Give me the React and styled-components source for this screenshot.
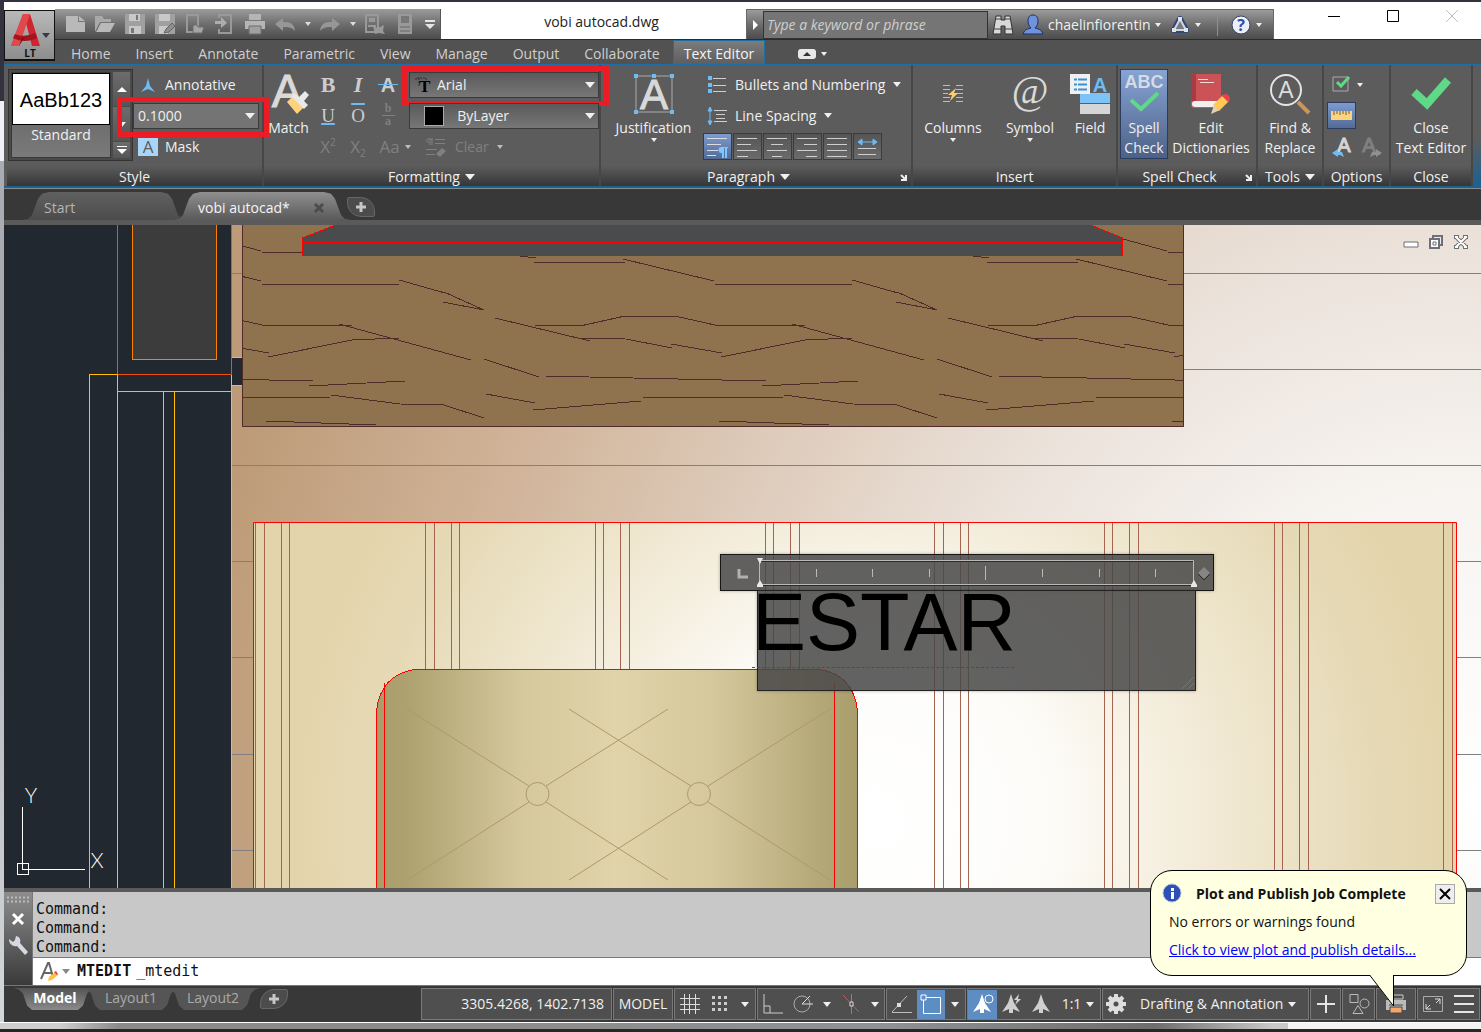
import React from "react";
import styled, { createGlobalStyle, css } from "styled-components";

const GlobalStyle = createGlobalStyle`
  * { box-sizing: border-box; }
  body {
    margin: 0;
    font-family: "Open Sans", "Noto Sans", sans-serif;
    font-size: 14px;
    line-height: 20px;
    color: #f0f0f0;
    background: #33333f;
  }
  button, input, select, textarea { font: inherit; color: inherit; }
  button { padding: 0; border: 0; background: none; white-space: nowrap; }
  svg { display: block; flex: none; overflow: visible; }
`;

const metal = "linear-gradient(#9b9b9b, #6e6e6e 50%, #4c4c4c)";
const BLUE = "#6cbcf5";
const GREEN = "#5fd887";

const Desktop = styled.div`
  display: flex;
  flex-direction: column;
  min-height: 100vh;
  padding: 2px 0 0 4px;
  background: linear-gradient(#33333f 0 101px, #f0f1f6 101px 161px, #a9acb1 161px 340px, #b4b8bf 600px, #d2d6d8 1015px);
`;

const DesktopEdge = styled.div`
  height: 10px;
  margin-left: -4px;
  border-top: 1px solid #fff;
  border-bottom: 3px solid #25272b;
  background: linear-gradient(90deg, #cfd0cb 0 4%, #8b8b89 8% 30%, #8f9194 60%, #6e6e6b 78%, #c9cac6 86% 87%, #f3f3f3 87%);
`;

const Caret = styled.span`
  display: inline-block;
  flex: none;
  border: solid transparent;
  border-width: ${({ $size = 3 }) => `${$size + 1}px ${$size}px 0`};
  border-top-color: ${({ $color = "#f0f0f0" }) => $color};
`;

/* Title bar */

const Header = styled.header`
  display: flex;
  background: linear-gradient(#fff 0 38px, #525252 38px);
`;

const HeaderMain = styled.div`
  flex: 1;
  min-width: 0;
`;

const AppButton = styled.button`
  display: flex;
  align-items: center;
  justify-content: center;
  gap: 2px;
  width: 51px;
  height: 51px;
  margin-top: 8px;
  border: 1px solid #111;
  border-bottom-width: 2px;
  background: linear-gradient(#b9b9b9, #8d8d8d);
`;

const TitleBar = styled.div`
  display: flex;
  align-items: flex-end;
  height: 38px;
  border-bottom: 1px solid #2b2b2b;
`;

const QuickAccess = styled.div`
  display: flex;
  align-items: center;
  height: 30px;
  padding-left: 5px;
  background: ${metal};
  border-right: 1px solid #555;
`;

const ToolSlot = styled.button`
  display: flex;
  align-items: center;
  justify-content: center;
  gap: 5px;
  width: ${({ $w = 30 }) => $w}px;
  height: 28px;
`;

const Title = styled.h1`
  flex: 1;
  margin: 0 0 0 16px;
  align-self: center;
  padding-top: 3px;
  font-size: 14px;
  font-weight: 400;
  text-align: center;
  color: #222;
`;

const InfoCenter = styled.div`
  display: flex;
  align-items: center;
  width: 528px;
  height: 30px;
  background: ${metal};
  border: 1px solid #666;
  border-bottom: 0;
`;

const SearchInput = styled.input`
  width: 225px;
  height: 28px;
  padding: 0 3px;
  border: 1px solid #333;
  background: #757575;
  &::placeholder {
    color: #cfcfcf;
    font-style: italic;
    opacity: 1;
  }
`;

const Divider = styled.span`
  width: 1px;
  height: 22px;
  margin: 0 6px;
  background: #8f8f8f;
`;

const WindowButtons = styled.div`
  display: flex;
  align-self: stretch;
  margin-left: 30px;
`;

/* Ribbon tabs */

const RibbonTabs = styled.nav`
  display: flex;
  gap: 1px;
  height: 24px;
  padding-left: 4px;
`;

const RibbonTab = styled.button`
  height: 24px;
  padding: 4px 12px 0;
  color: #cfcfcf;
  ${({ $active }) =>
    $active &&
    css`
      padding: 2px 10px 0;
      color: #f4f4f4;
      background: linear-gradient(#7b7b7b, #5e5e5e);
      border: 1px solid #1d6fa5;
      border-bottom: 0;
    `}
`;

/* Ribbon */

const Ribbon = styled.section`
  display: flex;
  border-top: 1px solid #1d6fa5;
  border-bottom: 2px solid #1c628f;
  background: #5c5c5c;
  padding-left: 3px;
`;

const Panel = styled.div`
  display: flex;
  flex-direction: column;
  flex: 0 0 ${({ $w }) => $w}px;
  height: 121px;
  border-right: 2px solid #474747;
`;

const PanelBody = styled.div`
  display: flex;
  flex: 1;
  padding: ${({ $pad = "4px 0 0" }) => $pad};
`;

const PanelFooter = styled.div`
  display: flex;
  align-items: center;
  gap: 8px;
  height: 20px;
  padding: 2px 4px 0;
  background: linear-gradient(#5c5c5c, #363636);
`;

const FooterLabel = styled.span`
  display: flex;
  flex: 1;
  align-items: center;
  justify-content: center;
  gap: 5px;
`;

const Rows = styled.div`
  display: flex;
  flex-direction: column;
`;

const Row = styled.div`
  display: flex;
  align-items: center;
  height: 31px;
`;

const TextButton = styled.button`
  display: flex;
  align-items: center;
  gap: ${({ $gap = 8 }) => $gap}px;
  color: ${({ disabled }) => (disabled ? "#808080" : "#f0f0f0")};
`;

const BigButton = styled.button`
  display: flex;
  flex-direction: column;
  align-items: center;
  width: ${({ $w }) => $w}px;
  height: 90px;
  border: 1px solid transparent;
  line-height: 20px;
  ${({ $on }) =>
    $on &&
    css`
      border-color: #2c3c5e;
      background: linear-gradient(#87a4d4, #4c6187);
    `}
`;

const BigIcon = styled.span`
  display: flex;
  align-items: center;
  justify-content: center;
  height: 48px;
`;

const Gallery = styled.div`
  display: flex;
  width: 125px;
  height: 92px;
  padding: 2px;
  gap: 2px;
  border: 1px solid #333;
  background: #4a4a4a;
`;

const StyleCard = styled.button`
  display: flex;
  flex-direction: column;
  align-items: center;
  flex: 1;
  border: 1px solid #3a3a3a;
  background: linear-gradient(#5c5c5c, #7a7a7a);
`;

const StylePreview = styled.span`
  width: 100%;
  height: 52px;
  border: 1px solid #000;
  background: #fff;
  color: #000;
  font: 20px/52px "Liberation Sans", sans-serif;
`;

const GallerySteps = styled.div`
  display: grid;
  grid-template-rows: 34px 34px 1fr;
  gap: 1px;
  width: 17px;
`;

const StepButton = styled.button`
  display: flex;
  align-items: center;
  justify-content: center;
  background: linear-gradient(#6c6c6c, #555);
`;

const Combo = styled.div`
  position: relative;
  display: flex;
  align-items: center;
  gap: 6px;
  width: ${({ $w }) => $w}px;
  height: 26px;
  margin-left: ${({ $indent = 0 }) => $indent}px;
  padding: 0 3px 0 ${({ $left = 4 }) => $left}px;
  border: 1px solid #3a3a3a;
  background: ${({ $flat }) => ($flat ? "#747474" : "linear-gradient(#5a5a5a, #777)")};
  select {
    flex: 1;
    min-width: 0;
    padding: 0;
    border: 0;
    outline: 0;
    appearance: none;
    background: none;
  }
`;

/* Red frame drawn over the highlighted drop-downs */
const Marked = styled(Combo)`
  &::after {
    content: "";
    position: absolute;
    inset: -7px -11px -9px ${({ $out = -8 }) => $out}px;
    border: 5px solid #ed1c24;
    pointer-events: none;
  }
`;

const Swatch = styled.span`
  width: 20px;
  height: 20px;
  border: 1px solid #aaa;
  background: #000;
`;

const Glyph = styled.button`
  width: 30px;
  height: 28px;
  font: 700 22px/26px "Liberation Serif", serif;
  color: #cdcdcd;
  font-style: ${({ $italic }) => ($italic ? "italic" : "normal")};
`;

const LineGlyph = styled(Glyph)`
  font-size: 19px;
  font-weight: 400;
  span {
    text-decoration: ${({ $line }) => $line} ${BLUE} 2px;
  }
`;

const Script = styled(Glyph)`
  font: 17px/26px "Open Sans", sans-serif;
  color: #808080;
  sup, sub { font-size: 10px; line-height: 0; }
`;

const CaseButton = styled(ToolSlot)`
  width: 44px;
  margin-right: 8px;
  font-size: 17px;
  color: #808080;
`;

const AlignButton = styled.button`
  display: flex;
  align-items: center;
  justify-content: center;
  width: 29px;
  height: 27px;
  margin-right: 1px;
  border: 1px solid ${({ $on }) => ($on ? "#2c3c5e" : "#3c3c3c")};
  background: ${({ $on }) => ($on ? "linear-gradient(#7d9bce, #536b96)" : "linear-gradient(#555, #6b6b6b)")};
`;

const RibbonEnd = styled.div`
  flex: 1;
  background: linear-gradient(#5c5c5c 60%, #1c628f);
`;

/* Document tabs */

const DocBar = styled.nav`
  display: flex;
  align-items: flex-end;
  height: 37px;
  padding-left: 18px;
  border-top: 1px solid #8a8a8a;
  border-bottom: 5px solid #5a5a5a;
  background: #383838;
`;

const tabShape = `polygon(
  0 100%, 6px 96%, 10px 82%, 16px 24%, 20px 6%, 27px 0,
  calc(100% - 27px) 0, calc(100% - 20px) 6%, calc(100% - 16px) 24%,
  calc(100% - 10px) 82%, calc(100% - 6px) 96%, 100% 100%)`;

const DocTab = styled.button`
  display: flex;
  align-items: center;
  justify-content: space-between;
  width: ${({ $w }) => $w}px;
  height: 28px;
  padding: ${({ $active }) => ($active ? "3px 27px 0 25px" : "3px 0 0 22px")};
  margin-right: -15px;
  clip-path: ${tabShape};
  color: ${({ $active }) => ($active ? "#f6f6f6" : "#b4b4b4")};
  background: ${({ $active }) =>
    $active ? "linear-gradient(#8f8f8f, #5a5a5a)" : "linear-gradient(#606060, #4c4c4c)"};
`;

const AddTab = styled.button`
  display: flex;
  align-items: center;
  justify-content: center;
  width: 28px;
  height: 20px;
  margin: ${({ $low }) => ($low ? "1px 0 0 14px" : "0 0 3px 11px")};
  border: 1px solid #666;
  border-radius: ${({ $low }) => ($low ? "14px 2px 14px 2px" : "2px 14px 2px 14px")};
  background: #4c4c4c;
`;

/* Drawing area */

const Canvas = styled.main`
  position: relative;
  flex: 1;
  min-height: 300px;
  overflow: hidden;
  background: #212830;
`;

const Drawing = styled.svg`
  position: absolute;
  inset: 0;
  width: 100%;
  height: 100%;
`;

const ViewButtons = styled.div`
  position: absolute;
  top: 9px;
  right: 12px;
  display: flex;
  gap: 9px;
`;

const MtextRuler = styled.div`
  position: absolute;
  left: 716px;
  top: 329px;
  width: 494px;
  height: 37px;
  border: 1px solid #161616;
  background: rgba(72, 72, 72, 0.86);
  box-shadow: 0 0 3px rgba(0, 0, 0, 0.3);
`;

const MtextBox = styled.div`
  position: absolute;
  left: 753px;
  top: 365px;
  width: 439px;
  height: 101px;
  display: flex;
  align-items: flex-end;
  justify-content: flex-end;
  border: 1px solid #222;
  background: rgba(72, 72, 72, 0.86);
  box-shadow: 0 0 3px rgba(0, 0, 0, 0.3);
`;

const MtextInput = styled.input`
  position: absolute;
  left: 748px;
  top: 352px;
  width: 262px;
  height: 91px;
  padding: 0;
  border: 0;
  border-bottom: 1px dashed #f00;
  outline: 0;
  background: none;
  font: 81px/90px "Liberation Sans", sans-serif;
  color: #000;
`;

/* Command line */

const CommandWindow = styled.section`
  display: flex;
  border-top: 4px solid #5a5a5a;
  color: #111;
  font-family: "DejaVu Sans Mono", monospace;
  font-size: 15px;
  line-height: 19px;
`;

const CommandGrip = styled.div`
  display: flex;
  flex-direction: column;
  align-items: center;
  gap: 10px;
  width: 29px;
  padding-top: 4px;
  background: linear-gradient(#8d8d8d, #3a3a3a);
  border-right: 1px solid #777;
`;

const CommandMain = styled.div`
  flex: 1;
  min-width: 0;
`;

const History = styled.div`
  padding: 8px 3px 0;
  background: #c8c8c8;
  border-bottom: 1px solid #7a7a7a;
`;

const CommandRow = styled.label`
  display: flex;
  align-items: center;
  gap: 3px;
  height: 27px;
  padding-left: 7px;
  background: #fff;
  b { margin: 0 2px 0 4px; }
  input { flex: 1; padding: 0; border: 0; outline: 0; background: none; }
`;

/* Status bar */

const StatusBar = styled.footer`
  position: relative;
  display: flex;
  justify-content: space-between;
  height: 37px;
  padding: 2px 1px 3px 10px;
  border-top: 1px solid #777;
  background: #383838;
`;

const LayoutTabs = styled.div`
  display: flex;
`;

const LayoutTab = styled.button`
  width: ${({ $w }) => $w}px;
  height: 22px;
  margin-right: -14px;
  padding-bottom: 3px;
  line-height: 19px;
  color: ${({ $active }) => ($active ? "#fff" : "#aaa")};
  font-weight: ${({ $active }) => ($active ? 700 : 400)};
  background: ${({ $active }) => ($active ? "linear-gradient(#555, #8a8a8a)" : "#555")};
  clip-path: polygon(
    0 0, 5px 8%, 9px 25%, 13px 80%, 18px 100%,
    calc(100% - 18px) 100%, calc(100% - 13px) 80%, calc(100% - 9px) 25%, calc(100% - 5px) 8%, 100% 0);
`;

const StatusCells = styled.div`
  display: flex;
  gap: 1px;
`;

const Cell = styled.div`
  display: flex;
  align-items: center;
  justify-content: ${({ $justify = "center" }) => $justify};
  width: ${({ $w }) => $w}px;
  height: 32px;
  padding: 0 ${({ $pad = 0 }) => $pad}px;
  border: 1px solid #7a7a7a;
  background: #4f4f4f;
  white-space: nowrap;
`;

const StatusButton = styled.button`
  display: flex;
  align-items: center;
  justify-content: center;
  gap: 5px;
  width: ${({ $w = 30 }) => $w}px;
  height: 29px;
  background: ${({ $on }) => ($on ? "#5d8dc2" : "none")};
`;

const Bubble = styled.aside`
  position: absolute;
  right: 14px;
  bottom: 46px;
  width: 317px;
  height: 106px;
  padding: 13px 11px 0 13px;
  border: 1px solid #000;
  border-radius: 22px;
  background: #ffffe1;
  color: #111;
`;

const BubbleHead = styled.div`
  display: flex;
  align-items: center;
  gap: 12px;
  height: 20px;
  font-weight: 700;
  button {
    display: flex;
    align-items: center;
    justify-content: center;
    width: 20px;
    height: 20px;
    margin-left: auto;
    border: 1px solid #aaa;
    background: #eee;
  }
`;

const BubbleText = styled.p`
  margin: 8px 5px 0;
  a { color: #00f; }
`;

const BubbleTail = styled.svg`
  position: absolute;
  top: 103px;
  right: 71px;
`;

const Icon = ({ w = 20, h = w, children }) => (
  <svg width={w} height={h} viewBox={`0 0 ${w} ${h}`} fill="none">
    {children}
  </svg>
);

const icons = {
  fresh: <Icon><path d="M1 2h12v6h7v10H1z M14 2l6 5h-6z" fill="#b9b9b9" /></Icon>,
  open: <Icon><path d="M0 18V2h7l2 3h7v3H5z" fill="#a9a9a9" /><path d="M6 9h14l-5 9H1z" fill="#b9b9b9" /></Icon>,
  save: <Icon><path d="M0 0h20v20H0z" fill="#a0a0a0" /><path d="M4 0h11v7H4z M4 12h12v8H4z" fill="#c8c8c8" /><path d="M11 1h2v5h-2z M6 14h3v5H6z" fill="#777" /></Icon>,
  saveAs: <Icon><path d="M0 0h20v20H0z" fill="#a0a0a0" /><path d="M4 0h11v7H4z M4 12h9v8H4z" fill="#c8c8c8" /><path d="M9 19l2-4 6-6 3 3-6 6z" fill="#8d8d8d" stroke="#666" /></Icon>,
  mobileOpen: <Icon><path d="M2 1h11v17H2z" stroke="#999" strokeWidth="2" /><path d="M8 19v-8h4l1 2h6l-2 6z" fill="#a5a5a5" stroke="#6d6d6d" /></Icon>,
  mobileSave: <Icon><path d="M4 4V1h12v18H4v-4" stroke="#999" strokeWidth="2" /><path d="M0 7h6V3l6 6-6 5v-4H0z" fill="#adadad" /></Icon>,
  print: <Icon><path d="M4 0h12v6H4z M0 7h20v8H0z" fill="#b5b5b5" /><path d="M4 12h12v8H4z" fill="#a0a0a0" stroke="#6d6d6d" /></Icon>,
  undo: <Icon><path d="M0 10l8-6v4c7 0 11 1 12 9-3-4-7-4-12-4v4z" fill="#979797" /></Icon>,
  redo: <Icon><path d="M20 10l-8-6v4C5 8 1 9 0 17c3-4 7-4 12-4v4z" fill="#979797" /></Icon>,
  sheet: <Icon><path d="M1 1h12v17H1z" stroke="#999" strokeWidth="2" /><path d="M4 4h6v4H4z M3 11h8v2H3z" fill="#999" /><path d="M8 12l5 2 6-3-1 6 2 3-6-1-4 1z" fill="#999" /></Icon>,
  props: <Icon><path d="M3 0h14v20H3z" fill="#999" /><path d="M6 2h8v7H6z" fill="#777" /><path d="M5 13h10M5 17h10" stroke="#666" /></Icon>,
};

const QAT = ["fresh", "open", "save", "saveAs", "mobileOpen", "mobileSave", "print", "undo", "caret", "redo", "caret", "sheet", "props"];

const LogoIcon = () => (
  <Icon w={30} h={46}>
    <path d="M1 34 13 2h7l10 32h-8L16 11 9 34z" fill="#cf2530" />
    <path d="M13 2h7l-3 9-8 23H1z" fill="#e2474c" />
    <path d="M5 22c6 3 13 2 20-1l2 5c-8 4-16 4-24 0z" fill="#a3141d" />
    <path d="M9 34l3-8 3-1z" fill="#7d0e15" />
    <text x="20" y="45" textAnchor="middle" fontFamily="Open Sans" fontWeight="700" fontSize="10" fill="#111">LT</text>
  </Icon>
);

const Lines = ({ rows }) => (
  <Icon w={21} h={20}>
    {rows.map(([a, b], i) => (
      <path key={i} d={`M${a} ${1 + i * 6}.5H${b}`} stroke="#cfcfcf" />
    ))}
  </Icon>
);

const ALIGNS = [
  ["Left", [[0, 20], [0, 14], [0, 20], [0, 11]]],
  ["Center", [[0, 20], [4, 16], [0, 20], [5, 15]]],
  ["Right", [[0, 20], [7, 20], [0, 20], [9, 20]]],
  ["Justify", [[0, 20], [0, 20], [0, 20], [0, 20]]],
];

const Launcher = () => (
  <Icon w={7}><path d="M1 1l4 4M6 1v5H1" stroke="#eee" strokeWidth="2" /></Icon>
);

const PlusIcon = () => (
  <Icon w={10}><path d="M5 0v10M0 5h10" stroke="#c6c6c6" strokeWidth="3" /></Icon>
);

const RibbonPanel = ({ width, label, caret, launcher, pad, children }) => (
  <Panel $w={width}>
    <PanelBody $pad={pad}>{children}</PanelBody>
    <PanelFooter>
      <FooterLabel>
        {label}
        {caret && <Caret $size={5} />}
      </FooterLabel>
      {launcher && <Launcher />}
    </PanelFooter>
  </Panel>
);

const Large = ({ width, icon, lines, caret, on }) => (
  <BigButton $w={width} $on={on}>
    <BigIcon>{icon}</BigIcon>
    {lines.map((line) => <span key={line}>{line}</span>)}
    {caret && <Caret />}
  </BigButton>
);

const StylePanel = () => (
  <RibbonPanel width={257} label="Style" pad="4px 0 0 1px">
    <Gallery>
      <StyleCard>
        <StylePreview>AaBb123</StylePreview>
        Standard
      </StyleCard>
      <GallerySteps>
        <StepButton aria-label="Previous"><Icon w={10} h={5}><path d="M0 5l5-5 5 5z" fill="#fff" /></Icon></StepButton>
        <StepButton aria-label="Next"><Caret $size={4} /></StepButton>
        <StepButton aria-label="More"><Icon w={10} h={8}><path d="M0 0h10v1H0z M0 3h10L5 8z" fill="#fff" /></Icon></StepButton>
      </GallerySteps>
    </Gallery>
    <Rows>
      <Row>
        <TextButton $gap={10}>
          <Icon w={22} h={16}><path d="M15 1l2 8 5 6-7-3-7 3 5-6z" fill={BLUE} /></Icon>
          Annotative
        </TextButton>
      </Row>
      <Row>
        <Marked $w={126} $flat $out={-17}>
          <select aria-label="Text height"><option>0.1000</option></select>
          <Caret $size={5} />
        </Marked>
      </Row>
      <Row>
        <TextButton $gap={7}>
          <Icon w={25} h={18}>
            <path d="M5 0h20v18H5z" fill="#a9d6f8" />
            <text x="15" y="15" textAnchor="middle" fontFamily="Open Sans" fontSize="17" fill="#5c5c5c">A</text>
          </Icon>
          Mask
        </TextButton>
      </Row>
    </Rows>
  </RibbonPanel>
);

const FormattingPanel = () => (
  <RibbonPanel width={337} label="Formatting" caret>
    <Large
      width={49}
      lines={["Match"]}
      icon={
        <Icon w={40}>
          <text x="18" y="33" textAnchor="middle" fontFamily="Liberation Sans" fontSize="46" fill="#d9d9d9" stroke="#d9d9d9">A</text>
          <path d="M18 28l6-6 11 11-7 7z" fill="#ffd27d" />
          <path d="M22 22l3-3 5 4 6-6 4 4-5 6 4 4-4 4z" fill="#e8e8e8" />
        </Icon>
      }
    />
    <Rows>
      <Row>
        <Glyph>B</Glyph>
        <Glyph $italic>I</Glyph>
        <Glyph aria-label="Strikethrough">
          <Icon w={30} h={26}>
            <text x="15" y="20" textAnchor="middle" fontFamily="Liberation Sans" fontWeight="700" fontSize="20" fill="#cdcdcd">A</text>
            <path d="M5 12.500h20" stroke={BLUE} />
          </Icon>
        </Glyph>
        <Marked $w={190} $indent={6} $left={5}>
          <Icon w={16} h={16}>
            <path d="M1 3V1h10v2M4 1v9" stroke="#2e2e2e" strokeDasharray="2 1" />
            <text x="4" y="15" fontFamily="Liberation Serif" fontWeight="700" fontSize="17" fill="#000">T</text>
          </Icon>
          <select aria-label="Font"><option>Arial</option></select>
          <Caret $size={5} />
        </Marked>
      </Row>
      <Row>
        <LineGlyph $line="underline"><span>U</span></LineGlyph>
        <LineGlyph $line="overline"><span>O</span></LineGlyph>
        <Glyph aria-label="Stack">
          <Icon w={30} h={26}>
            <text x="15" y="9" textAnchor="middle" fontFamily="Liberation Serif" fontSize="12" fill="#808080">b</text>
            <path d="M9 12.500h13" stroke="#808080" />
            <text x="15" y="22" textAnchor="middle" fontFamily="Liberation Serif" fontSize="12" fill="#808080">a</text>
          </Icon>
        </Glyph>
        <Combo $w={190} $indent={6} $left={14}>
          <Swatch />
          <select aria-label="Text color"><option>&nbsp;&nbsp;ByLayer</option></select>
          <Caret $size={5} />
        </Combo>
      </Row>
      <Row>
        <Script>X<sup>2</sup></Script>
        <Script>X<sub>2</sub></Script>
        <CaseButton>Aa<Caret $color="#bdbdbd" /></CaseButton>
        <TextButton disabled>
          <Icon w={22} h={20}>
            <path d="M8 2h-5a1 1 0 0 0 0 3h1M5 2v6M7 2v6M10 2.500h10M10 6.500h10M1 12.500h11M1 17.500h9" stroke="#808080" />
            <path d="M11 17l6-6 4 3-6 6z" fill="#808080" />
          </Icon>
          Clear
          <Caret $color="#bdbdbd" />
        </TextButton>
      </Row>
    </Rows>
  </RibbonPanel>
);

const ParagraphPanel = () => (
  <RibbonPanel width={312} label="Paragraph" caret launcher pad="4px 0 0 3px">
    <Large
      width={99}
      lines={["Justification"]}
      caret
      icon={
        <Icon w={40}>
          <text x="20" y="35" textAnchor="middle" fontFamily="Liberation Sans" fontSize="42" fill="#d9d9d9" stroke="#d9d9d9">A</text>
          <path d="M2 2h36v36H2z" stroke="#aaa" />
          <path d="M0 0h4v4H0z M18 0h4v4h-4z M36 0h4v4h-4z M0 36h4v4H0z M36 36h4v4h-4z" fill={BLUE} />
        </Icon>
      }
    />
    <Rows>
      <Row>
        <TextButton>
          <Icon w={24} h={18}>
            <path d="M10 2.500h13M10 9.500h13M10 15.500h13" stroke="#cfcfcf" />
            <path d="M5 0h4v4H5z M5 7h4v4H5z M5 13h4v4H5z" fill={BLUE} />
          </Icon>
          Bullets and Numbering
          <Caret $size={4} />
        </TextButton>
      </Row>
      <Row>
        <TextButton>
          <Icon w={24} h={20}>
            <path d="M11 4.500h13M13 8.500h9M13 12.500h9M11 15.500h13" stroke="#cfcfcf" />
            <path d="M7 1v18M5 5l2-4 2 4zM5 15l2 4 2-4z" stroke={BLUE} fill={BLUE} />
          </Icon>
          Line Spacing
          <Caret $size={4} />
        </TextButton>
      </Row>
      <Row>
        <AlignButton $on aria-label="Default">
          <Icon w={21} h={20}>
            <path d="M0 1.500h20M0 7.500h14M0 13.500h11M0 18.500h9" stroke="#dcdcdc" />
            <path d="M14 10h7v1h-1v10h-2V11h-1v10h-2v-5a3 3 0 0 1-1-6z" fill="#7cc8ff" />
          </Icon>
        </AlignButton>
        {ALIGNS.map(([name, rows]) => (
          <AlignButton key={name} aria-label={name}><Lines rows={rows} /></AlignButton>
        ))}
        <AlignButton aria-label="Distribute">
          <Icon w={21} h={20}>
            <path d="M1 11.500h18M1 17.500h18" stroke="#cfcfcf" />
            <path d="M4 5h13M5 2L1 5l4 3zM16 2l4 3-4 3z" stroke={BLUE} fill={BLUE} />
          </Icon>
        </AlignButton>
      </Row>
    </Rows>
  </RibbonPanel>
);

const InsertPanel = () => (
  <RibbonPanel width={205} label="Insert">
    <Large
      width={80}
      lines={["Columns"]}
      caret
      icon={
        <Icon>
          <path d="M0 1.500h7M0 5.500h7M0 9.500h5M0 13.500h7M0 17.500h7M13 1.500h7M13 5.500h7M14 9.500h6M13 13.500h7M13 17.500h7" stroke="#bdbdbd" />
          <path d="M13 4l-8 7h4l-2 6 8-8h-4z" fill="#ffcf6b" />
        </Icon>
      }
    />
    <Large
      width={74}
      lines={["Symbol"]}
      caret
      icon={
        <Icon w={40}>
          <text x="20" y="29" textAnchor="middle" fontFamily="Liberation Serif" fontStyle="italic" fontSize="40" fill="#d9d9d9">@</text>
        </Icon>
      }
    />
    <Large
      width={46}
      lines={["Field"]}
      icon={
        <Icon w={40}>
          <path d="M10 19h30v10H10z" fill="#7cc3f7" />
          <path d="M10 30h30v10H10z" fill="#d5d5d5" />
          <path d="M0 0h20v20H0z" fill="#f0f0f0" />
          <path d="M8 5.500h9M8 10.500h9M8 15.500h9M4 5.500h3M4 10.500h3M4 15.500h3" stroke="#3b8fd6" strokeWidth="2" />
          <text x="30" y="18" textAnchor="middle" fontFamily="Liberation Sans" fontWeight="700" fontSize="20" fill={BLUE}>A</text>
        </Icon>
      }
    />
  </RibbonPanel>
);

const SpellPanel = () => (
  <RibbonPanel width={140} label="Spell Check" launcher pad="4px 0 0 2px">
    <Large
      width={48}
      on
      lines={["Spell", "Check"]}
      icon={
        <Icon w={42} h={40}>
          <text x="21" y="14" textAnchor="middle" fontFamily="Liberation Sans" fontWeight="700" fontSize="18" fill="#d5dbe5">ABC</text>
          <path d="M8 26l10 9 17-16" stroke={GREEN} strokeWidth="4" />
        </Icon>
      }
    />
    <Large
      width={86}
      lines={["Edit", "Dictionaries"]}
      icon={
        <Icon w={40}>
          <path d="M3 0h27v34H3q-3 0-3-4V3q0-3 3-3z" fill="#cb5257" />
          <path d="M3 0h2v27H0V3q0-3 3-3z" fill="#a93c42" />
          <path d="M4 27h26v6H4q-3 0-3-3t3-3z" fill="#f0f0f0" />
          <path d="M7 5.500h10M9 8.500h14" stroke="#f0dede" />
          <path d="M20 40l3-9 6 5z" fill="#e0d0b8" />
          <path d="M22 31l10-10 6 6-10 10z" fill="#ffc857" />
          <path d="M31 22l2-2q6-1 6 6l-2 2z" fill="#ee3f4b" />
        </Icon>
      }
    />
  </RibbonPanel>
);

const OptionsPanel = () => (
  <RibbonPanel width={67} label="Options" pad="4px 0 0 3px">
    <Rows>
      <Row>
        <ToolSlot $w={40} aria-label="Character set">
          <Icon w={20} h={18}>
            <path d="M1 1h15v14H1z" stroke="#aaa" />
            <path d="M5 6l4 4 8-9" stroke={GREEN} strokeWidth="3" />
          </Icon>
          <Caret />
        </ToolSlot>
      </Row>
      <Row>
        <AlignButton $on aria-label="Ruler">
          <Icon w={21} h={9}>
            <path d="M0 0h21v9H0z" fill="#ffd27d" />
            <path d="M3 0v4M6 0v3M9 0v4M12 0v3M15 0v4M18 0v3" stroke="#5c5c5c" />
          </Icon>
        </AlignButton>
      </Row>
      <Row>
        <ToolSlot aria-label="Undo">
          <Icon w={21} h={20}>
            <text x="12" y="15" textAnchor="middle" fontFamily="Liberation Sans" fontSize="20" fill="#d5d5d5" stroke="#d5d5d5">A</text>
            <path d="M0 16l6-4v3h4l2 5-4-2H6v2z" fill={BLUE} />
          </Icon>
        </ToolSlot>
        <ToolSlot aria-label="Redo">
          <Icon w={21} h={20}>
            <text x="7" y="15" textAnchor="middle" fontFamily="Liberation Sans" fontSize="20" fill="#808080" stroke="#808080">A</text>
            <path d="M20 16l-6-4v3h-4l-2 5 4-2h2v2z" fill="#909090" />
          </Icon>
        </ToolSlot>
      </Row>
    </Rows>
  </RibbonPanel>
);

/* One repeat of the wood grain; the tabletop shows it three times */
const GRAIN = [
  "670,239 714,251", "715,252 755,252", "520,256 536,258", "534,262 625,262", "623,259 714,281", "715,284 852,284",
  "852,280 898,293", "897,292 937,310", "896,302 937,310", "495,318 590,341", "534,325 580,326 625,316 675,316 715,325 805,325",
  "792,324 924,360", "580,338 625,338", "626,339 672,348", "671,344 722,353", "721,357 805,340 852,338",
  "484,359 539,377", "545,376 766,381", "762,386 858,381", "486,394 535,403", "533,410 641,401", "643,397 783,397",
  "784,395 853,404 897,405 937,418", "719,421 829,425",
];

const FLOOR = [273, 369, 465, 561, 657, 754, 850];
const STRIPES = [255, 264, 281, 289, 425, 434, 451, 459, 595, 603, 620, 629, 765, 773, 790, 799, 934, 943, 960, 968, 1104, 1112, 1129, 1138, 1274, 1282, 1299, 1308, 1443, 1452];

const Plan = () => (
  <Drawing viewBox="4 225 1477 663" preserveAspectRatio="xMinYMin slice" fill="none">
    <defs>
      <radialGradient id="floor" gradientUnits="userSpaceOnUse" cx="1480" cy="800" r="1290">
        <stop offset="0" stopColor="#fff" />
        <stop offset="0.240" stopColor="#f7f4f1" />
        <stop offset="0.450" stopColor="#eae0d8" />
        <stop offset="0.640" stopColor="#dcc8b6" />
        <stop offset="0.800" stopColor="#d0b398" />
        <stop offset="1" stopColor="#bd9b78" />
      </radialGradient>
      <radialGradient id="rug" gradientUnits="userSpaceOnUse" cx="875" cy="820" r="580">
        <stop offset="0" stopColor="#fff" />
        <stop offset="0.300" stopColor="#fdfcf9" />
        <stop offset="0.580" stopColor="#f2ead6" />
        <stop offset="0.850" stopColor="#e6dab7" />
        <stop offset="1" stopColor="#e3d4ab" />
      </radialGradient>
      <linearGradient id="seat">
        <stop offset="0" stopColor="#a99d6b" />
        <stop offset="0.060" stopColor="#ada16f" />
        <stop offset="0.170" stopColor="#bfb283" />
        <stop offset="0.300" stopColor="#d5c89c" />
        <stop offset="0.500" stopColor="#e1d3aa" />
        <stop offset="0.700" stopColor="#d5c89c" />
        <stop offset="0.850" stopColor="#bfb283" />
        <stop offset="1" stopColor="#a99d6b" />
      </linearGradient>
      <clipPath id="top"><path d="M242 225h942v202H242z" /></clipPath>
    </defs>

    <path d="M232 225h1249v663H232z" fill="url(#floor)" />
    {FLOOR.map((y) => <path key={y} d={`M232 ${y}.5H1481`} stroke="#808080" />)}

    <g shapeRendering="crispEdges">
      <path d="M132.500 225v134.500h84V225" fill="#3c3c3c" stroke="#ff8000" />
      <path d="M117.500 225v149.500h114V225" stroke="#f0500f" />
      <path d="M89.500 888V374.500h28V888M117.500 391.500h114M163.500 391.500V888M174.500 391.500V888M231.500 374.500V888" stroke="#ffbf00" />
      <path d="M232 357h10v28h-10z" fill="#212830" />
      <path d="M232 357.500h10M232 385.500h10" stroke="#ffbf00" />
    </g>

    <g clipPath="url(#top)">
      <path d="M242 225h942v202H242z" fill="#8f734e" />
      {[-453, 0, 453].map((dx) => (
        <g key={dx} transform={`translate(${dx} 0)`} stroke="#4f2c2a" shapeRendering="crispEdges">
          {GRAIN.map((points) => <polyline key={points} points={points} />)}
        </g>
      ))}
      <path d="M242.500 225v201.500h941V225" stroke="#4f2c2a" />
    </g>
    <path d="M302.500 238l33-13h755l32 13v17.500h-820z" fill="#4a4b4d" stroke="#f00" shapeRendering="crispEdges" />
    <path d="M336 225h754" stroke="#4a4b4d" strokeWidth="2" />
    <path d="M302 242.500h820" stroke="#f00" />

    <path d="M253.500 522.500h1203V888h-1203z" fill="url(#rug)" />
    {STRIPES.map((x) => <path key={x} d={`M${x}.5 523V888`} stroke="#a6634d" />)}
    <path d="M253.500 888V522.500h1203V888" stroke="#f00" />

    <path d="M376.500 888V711q4-36 38-41.500h405q34 5 38 41.500v177z" fill="url(#seat)" />
    <path d="M376.500 888V711q4-36 38-41.500h405q34 5 38 41.500v177M384.500 683v205M834.500 683v205" stroke="#f00" shapeRendering="crispEdges" />
    <path
      d="M407 709l122 77M546 786l122-77M569 709l122 77M708 786l122-77M407 880l122-78M546 802l122 78M569 880l122-78M708 802l122 78"
      stroke="#a99b6b"
    />
    <circle cx="537.500" cy="794" r="11.500" stroke="#a99b6b" />
    <circle cx="699" cy="794" r="11.500" stroke="#a99b6b" />

    <g stroke="#fff" shapeRendering="crispEdges">
      <path d="M22.500 807v62.500H85M17.500 863.500h11v11h-11z" />
    </g>
    <text x="31" y="803" textAnchor="middle" fontFamily="Lato" fontWeight="300" fontSize="21" fill="#fff">Y</text>
    <text x="97" y="868" textAnchor="middle" fontFamily="Lato" fontWeight="300" fontSize="21" fill="#fff">X</text>
  </Drawing>
);

const MtextEditor = () => (
  <>
    <MtextRuler>
      <Icon w={492} h={35}>
        <path d="M18 14v8h9" stroke="#b0b0b0" strokeWidth="3" />
        <path d="M38.500 5.500h434v24h-434z" stroke="#bababa" />
        <path d="M39 6.500h433M39 30.500h433" stroke="#2a2a2a" />
        <path d="M95.500 14v8M151.500 14v8M208.500 14v8M264.500 11v14M321.500 14v8M378.500 14v8M434.500 14v8" stroke="#bababa" />
        <path d="M36 3h6l-3 6zM36 32v-2l3-5 3 5v2zM470 32v-2l3-5 3 5v2z" fill="#e8e8e8" />
        <path d="M477 18l6-6 6 6-6 6z" fill="#858585" />
        <path d="M477 19l6 6 6-6" stroke="#2a2a2a" />
      </Icon>
    </MtextRuler>
    <MtextBox>
      <Icon w={14}><path d="M1 13L13 1M7 13l6-6" stroke="#777" /></Icon>
    </MtextBox>
    <MtextInput aria-label="Text" defaultValue="ESTAR" spellCheck={false} />
  </>
);

const Scale = ({ mark }) => (
  <Icon w={22} h={20}>
    <path d="M10 0l3 9 6 9-7-3v4H8v-4l-7 3 6-9z" fill={mark === "ring" ? "#fff" : "#cfcfcf"} />
    {mark === "ring" && <circle cx="17" cy="5" r="4" stroke="#fff" />}
    {mark === "bolt" && <path d="M18 0l-5 6h3l-2 5 6-6h-3z" fill="#cfcfcf" />}
  </Icon>
);

const StatusTray = () => (
  <StatusCells>
    <Cell $w={191} $justify="flex-end" $pad={7}>3305.4268, 1402.7138</Cell>
    <Cell $w={60}>MODEL</Cell>
    <Cell $w={82}>
      <StatusButton aria-label="Grid"><Icon><path d="M4.500 0v20M9.500 0v20M15.500 0v20M0 4.500h20M0 10.500h20M0 15.500h20" stroke="#ddd" /></Icon></StatusButton>
      <StatusButton aria-label="Snap">
        <Icon w={16}>
          {[0, 6, 12].map((y) => <path key={y} d={`M0 ${y}h3v3H0z M6 ${y}h3v3H6z M12 ${y}h3v3h-3z`} fill="#ccc" />)}
        </Icon>
      </StatusButton>
      <StatusButton $w={20} aria-label="Snap settings"><Caret $size={4} /></StatusButton>
    </Cell>
    <Cell $w={128}>
      <StatusButton aria-label="Ortho"><Icon><path d="M1 0v19h19M1 12h6v7" stroke="#ccc" /></Icon></StatusButton>
      <StatusButton aria-label="Polar"><Icon><circle cx="9" cy="10" r="8" stroke="#aaa" /><path d="M9 10h11M9 10l8-8" stroke="#ddd" /></Icon></StatusButton>
      <StatusButton $w={18} aria-label="Polar settings"><Caret $size={4} /></StatusButton>
      <StatusButton aria-label="Isometric"><Icon w={16} h={20}><path d="M0 1l16 17" stroke="#c05b5b" /><path d="M8.500 0v20" stroke="#4aa96c" /><path d="M7 8h3v4H7z" stroke="#ddd" fill="#444" /></Icon></StatusButton>
      <StatusButton $w={18} aria-label="Isometric settings"><Caret $size={4} /></StatusButton>
    </Cell>
    <Cell $w={80}>
      <StatusButton aria-label="Object tracking"><Icon><path d="M0 18.500h20M0 18L15 2" stroke="#bbb" /><path d="M5 9h4v4H5z" fill="#ddd" /></Icon></StatusButton>
      <StatusButton $w={28} $on aria-label="Object snap"><Icon w={22} h={21}><path d="M3.500 3.500h17v16h-17z" stroke="#fff" /><path d="M1 1h5v5H1z" fill="#5d8dc2" stroke="#fff" /></Icon></StatusButton>
      <StatusButton $w={20} aria-label="Snap list"><Caret $size={4} /></StatusButton>
    </Cell>
    <Cell $w={134} $justify="flex-start">
      <StatusButton $w={29} $on aria-label="Annotation visibility"><Scale mark="ring" /></StatusButton>
      <StatusButton aria-label="Auto scale"><Scale mark="bolt" /></StatusButton>
      <StatusButton aria-label="Annotation scale"><Scale /></StatusButton>
      <StatusButton $w={42}>1:1<Caret $size={4} /></StatusButton>
    </Cell>
    <Cell $w={207} $justify="space-around">
      <Icon>
        <circle cx="10" cy="10" r="5" stroke="#ddd" strokeWidth="5" />
        <path d="M10 0v4M10 16v4M0 10h4M16 10h4M3 3l3 3M14 14l3 3M17 3l-3 3M3 17l3-3" stroke="#ddd" strokeWidth="4" />
      </Icon>
      <StatusButton $w={174}>Drafting &amp; Annotation<Caret $size={4} /></StatusButton>
    </Cell>
    <Cell $w={31}><Icon w={18}><path d="M9 0v18M0 9h18" stroke="#e5e5e5" strokeWidth="2" /></Icon></Cell>
    <Cell $w={33}><Icon w={20}><path d="M1 0.500h8v8H1zM4 19.500l5-8 5 8z" stroke="#bbb" /><circle cx="15.500" cy="9.500" r="4.500" stroke="#bbb" /></Icon></Cell>
    <Cell $w={40}>
      <Icon w={22} h={20}>
        <path d="M4 1h14v4H4z" stroke="#ccc" /><path d="M1 6h20v10H1z" fill="#bbb" />
        <path d="M4 11h14" stroke="#444" /><path d="M5 13h12v6H5z" fill="#f5a66c" stroke="#444" />
      </Icon>
    </Cell>
    <Cell $w={63} $justify="space-around">
      <Icon w={20} h={16}><path d="M0.500 0.500h19v15H0.500z" stroke="#aaa" /><path d="M12 3h5v5M8 13H3V8M17 3l-4 4M3 13l4-4" stroke="#ddd" /></Icon>
      <Icon w={20} h={18}><path d="M0 1h20M0 9h20M0 17h20" stroke="#e5e5e5" strokeWidth="2" /></Icon>
    </Cell>
  </StatusCells>
);

const PlotBubble = () => (
  <Bubble>
    <BubbleHead>
      <Icon w={20}>
        <circle cx="8" cy="9" r="9" fill="#2b51b8" stroke="#b5bccb" />
        <path d="M7 8h3v7H7z M7 4h3v3H7z" fill="#fff" />
      </Icon>
      <span>Plot and Publish Job Complete</span>
      <button aria-label="Close notification"><Icon w={12}><path d="M1 1l10 10M11 1L1 11" stroke="#000" strokeWidth="2" /></Icon></button>
    </BubbleHead>
    <BubbleText>No errors or warnings found</BubbleText>
    <BubbleText><a href="#details">Click to view plot and publish details...</a></BubbleText>
    <BubbleTail width="26" height="34" viewBox="0 0 26 34">
      <path d="M1 1l23 31V1" fill="#ffffe1" />
      <path d="M1 1.500L24.500 32V1" fill="none" stroke="#000" />
    </BubbleTail>
  </Bubble>
);

const MENU = ["Home", "Insert", "Annotate", "Parametric", "View", "Manage", "Output", "Collaborate"];

export default function App() {
  return (
    <>
      <GlobalStyle />
      <Desktop>
        <Header>
          <AppButton aria-label="Application menu">
            <LogoIcon />
            <Caret $size={4} $color="#333b4d" />
          </AppButton>
          <HeaderMain>
            <TitleBar>
              <QuickAccess>
                {QAT.map((name, i) =>
                  name === "caret" ? (
                    <ToolSlot key={i} $w={15} aria-label="History"><Caret $color="#ddd" /></ToolSlot>
                  ) : (
                    <ToolSlot key={i} aria-label={name}>{icons[name]}</ToolSlot>
                  )
                )}
                <ToolSlot $w={20} aria-label="Customize">
                  <Icon w={10} h={9}><path d="M0 0h10v2H0z M0 4h10L5 9z" fill="#e5e5e5" /></Icon>
                </ToolSlot>
              </QuickAccess>
              <Title>vobi autocad.dwg</Title>
              <InfoCenter>
                <ToolSlot $w={16} aria-label="Collapse search"><Icon w={5} h={10}><path d="M0 0l5 5-5 5z" fill="#fff" /></Icon></ToolSlot>
                <SearchInput aria-label="Search" placeholder="Type a keyword or phrase" />
                <ToolSlot aria-label="Search">
                  <Icon><path d="M3 1h5v4h4V1h5l3 18h-8v-8H8v8H0z" fill="#d8d8d8" stroke="#333" /><path d="M1 14h7M12 14h7M3 4h5M12 4h5" stroke="#444" /></Icon>
                </ToolSlot>
                <ToolSlot aria-label="Account">
                  <Icon><path d="M10 0c4 0 5 3 5 6s-1 5-3 7c5 1 7 3 8 6H0c1-3 3-5 8-6-2-2-3-4-3-7s1-6 5-6z" fill="#6f92dd" stroke="#1d2f66" /></Icon>
                </ToolSlot>
                <TextButton $gap={4}>chaelinfiorentin<Caret /></TextButton>
                <ToolSlot $w={50} aria-label="Apps">
                  <Icon>
                    <path d="M10 4l6 11H4z" stroke="#334678" strokeWidth="6" strokeLinejoin="round" />
                    <path d="M10 4l6 11H4z" fill="#7b7b7b" stroke="#cfd6e6" strokeWidth="2" />
                    <path d="M8 2h4v4H8zM2 13h4v4H2zM14 13h4v4h-4z" fill="#dfe4ef" />
                  </Icon>
                  <Caret />
                </ToolSlot>
                <Divider />
                <ToolSlot $w={46} aria-label="Help">
                  <Icon w={20}>
                    <circle cx="10" cy="10" r="9" fill="#eceff5" stroke="#39455f" />
                    <text x="10" y="16" textAnchor="middle" fontFamily="Open Sans" fontWeight="700" fontSize="16" fill="#2a4fae">?</text>
                  </Icon>
                  <Caret />
                </ToolSlot>
              </InfoCenter>
              <WindowButtons>
                <ToolSlot $w={59} aria-label="Minimize"><Icon w={12}><path d="M0 6.500h12" stroke="#000" /></Icon></ToolSlot>
                <ToolSlot $w={59} aria-label="Maximize"><Icon w={12}><path d="M0.500 0.500h11v11H0.500z" stroke="#000" /></Icon></ToolSlot>
                <ToolSlot $w={59} aria-label="Close"><Icon w={12}><path d="M0 0l12 12M12 0L0 12" stroke="#bbb" /></Icon></ToolSlot>
              </WindowButtons>
            </TitleBar>
            <RibbonTabs>
              {MENU.map((item) => <RibbonTab key={item}>{item}</RibbonTab>)}
              <RibbonTab $active>Text Editor</RibbonTab>
              <ToolSlot $w={92} aria-label="Minimize ribbon">
                <Icon w={18} h={10}><rect width="18" height="10" rx="3" fill="#e8e8e8" /><path d="M5 7l4-4 4 4z" fill="#333" /></Icon>
                <Caret />
              </ToolSlot>
            </RibbonTabs>
          </HeaderMain>
        </Header>

        <Ribbon>
          <StylePanel />
          <FormattingPanel />
          <ParagraphPanel />
          <InsertPanel />
          <SpellPanel />
          <RibbonPanel width={66} label="Tools" caret>
            <Large
              width={64}
              lines={["Find &", "Replace"]}
              icon={
                <Icon w={40}>
                  <path d="M28 28l11 11" stroke="#c9955c" strokeWidth="4" />
                  <circle cx="16" cy="16" r="15" stroke="#e5e5e5" strokeWidth="2" />
                  <text x="16" y="24" textAnchor="middle" fontFamily="Liberation Sans" fontSize="23" fill="#dcdcdc">A</text>
                </Icon>
              }
            />
          </RibbonPanel>
          <OptionsPanel />
          <RibbonPanel width={82} label="Close">
            <Large
              width={80}
              lines={["Close", "Text Editor"]}
              icon={<Icon w={40}><path d="M3 18l13 12L37 6" stroke={GREEN} strokeWidth="8" /></Icon>}
            />
          </RibbonPanel>
          <RibbonEnd />
        </Ribbon>

        <DocBar>
          <DocTab $w={166}>Start</DocTab>
          <DocTab $w={178} $active>
            vobi autocad*
            <Icon w={10}><path d="M1 1l8 8M9 1L1 9" stroke="#4c4c4c" strokeWidth="3" /></Icon>
          </DocTab>
          <AddTab aria-label="New drawing"><PlusIcon /></AddTab>
        </DocBar>

        <Canvas>
          <Plan />
          <MtextEditor />
          <ViewButtons>
            <button aria-label="Minimize view"><Icon w={16}><path d="M1 8h14v5H1z" fill="#fff" stroke="#6f6f76" /></Icon></button>
            <button aria-label="Restore view"><Icon w={16}><path d="M5 2h9v9h-9z" fill="#eee" stroke="#6f6f76" strokeWidth="2" /><path d="M2 5h9v9H2z" fill="#fff" stroke="#6f6f76" strokeWidth="2" /><path d="M5 8h3v3H5z" stroke="#6f6f76" /></Icon></button>
            <button aria-label="Close view"><Icon w={16}><path d="M3 3l10 10M13 3L3 13M1 3h5M10 3h5M1 13h5M10 13h5" stroke="#6f6f76" strokeWidth="4" /><path d="M3 3l10 10M13 3L3 13M2 3h3M11 3h3M2 13h3M11 13h3" stroke="#fff" strokeWidth="2" /></Icon></button>
          </ViewButtons>
        </Canvas>

        <CommandWindow>
          <CommandGrip>
            <Icon w={22} h={7}><path d="M0 1.500h22M0 5.500h22" stroke="#bbb" strokeWidth="2" strokeDasharray="2 2" /></Icon>
            <Icon w={12}><path d="M1 1l10 10M11 1L1 11" stroke="#fff" strokeWidth="3" /></Icon>
            <Icon w={20}><path d="M2 1l5 4 1-4c4 1 5 4 4 7l8 9-3 3-8-9C5 12 1 9 1 4l4 3 2-2z" fill="#d5dae2" /></Icon>
          </CommandGrip>
          <CommandMain>
            <History>
              <div>Command:</div>
              <div>Command:</div>
              <div>Command:</div>
            </History>
            <CommandRow>
              <Icon w={19} h={20}>
                <path d="M1 17L8 1h1l4 14M4 11h8" stroke="#666" strokeWidth="2" />
                <path d="M8 19l1-4 6-5 3 3-6 5z" fill="#ffc04a" /><path d="M14 10l2-1 2 3-1 1z" fill="#e8404a" />
              </Icon>
              <Caret $size={4} $color="#888" />
              <b>MTEDIT</b>
              <input defaultValue="_mtedit" spellCheck={false} />
            </CommandRow>
          </CommandMain>
        </CommandWindow>

        <StatusBar>
          <LayoutTabs>
            <LayoutTab $w={82} $active>Model</LayoutTab>
            <LayoutTab $w={98}>Layout1</LayoutTab>
            <LayoutTab $w={94}>Layout2</LayoutTab>
            <AddTab $low aria-label="New layout"><PlusIcon /></AddTab>
          </LayoutTabs>
          <StatusTray />
          <PlotBubble />
        </StatusBar>
        <DesktopEdge />
      </Desktop>
    </>
  );
}
